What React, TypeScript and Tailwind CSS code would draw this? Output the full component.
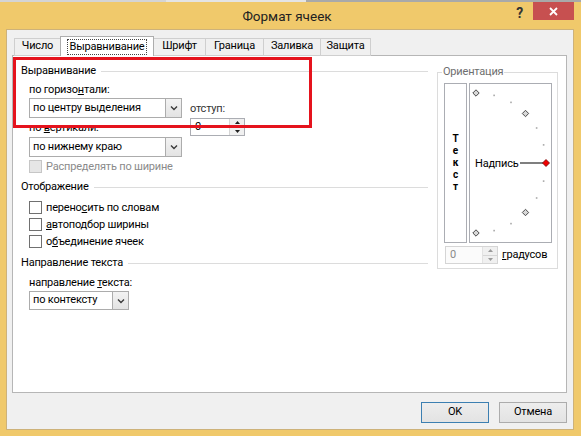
import { FC, ReactNode } from 'react';

// Win8-style "Формат ячеек" dialog, Alignment tab

const GroupHeader: FC<{ title: string; className?: string }> = ({ title, className = '' }) => (
  <div className={`flex h-4 items-center ${className}`}>
    <span className="whitespace-nowrap leading-4">{title}</span>
    <div className="ml-[5px] h-px flex-1 bg-[#DCDCDC]" />
  </div>
);

const Chevron: FC = () => (
  <svg width="8" height="6" viewBox="0 0 8 6">
    <path d="M1 1.5 L4 4.5 L7 1.5" fill="none" stroke="#3A3A3A" strokeWidth="1.4" />
  </svg>
);

const Select: FC<{ value: string; className?: string }> = ({ value, className = '' }) => (
  <div className={`flex border border-[#ACACAC] bg-white ${className}`}>
    <div className="flex flex-1 items-center whitespace-nowrap pl-[3px]">{value}</div>
    <div className="flex w-4 items-center justify-center border-l border-[#ACACAC] bg-gradient-to-b from-[#F3F3F3] to-[#E3E3E3]">
      <Chevron />
    </div>
  </div>
);

const Spinner: FC<{ disabled?: boolean; className?: string }> = ({ disabled = false, className = '' }) => {
  const arrow = disabled ? '#9A9A9A' : '#1E1E1E';
  return (
    <div
      className={`flex h-[18px] border ${
        disabled ? 'border-[#D5D5D5] bg-[#FBFBFB] text-[#8A8A8A]' : 'border-[#ABADB3] bg-white text-black'
      } ${className}`}
    >
      <div className="flex flex-1 items-center pl-[4px]">0</div>
      <div className={`flex w-[15px] flex-col border-l ${disabled ? 'border-[#E2E2E2]' : 'border-[#D6D6D6]'} bg-[#F0F0F0]`}>
        <div className="flex flex-1 items-center justify-center border-b border-[#D6D6D6]">
          <svg width="5" height="3" viewBox="0 0 5 3">
            <path d="M0 3 L2.5 0 L5 3 Z" fill={arrow} />
          </svg>
        </div>
        <div className="flex flex-1 items-center justify-center">
          <svg width="5" height="3" viewBox="0 0 5 3">
            <path d="M0 0 L2.5 3 L5 0 Z" fill={arrow} />
          </svg>
        </div>
      </div>
    </div>
  );
};

const Checkbox: FC<{ children: ReactNode; disabled?: boolean; className?: string }> = ({
  children,
  disabled = false,
  className = '',
}) => (
  <div className={`flex h-[17px] items-center ${className}`}>
    <div
      className={`h-[13px] w-[13px] shrink-0 border ${
        disabled ? 'border-[#C6C6C6] bg-[#E6E6E6]' : 'border-[#707070] bg-white'
      }`}
    />
    <span className={`ml-[4px] whitespace-nowrap leading-4 ${disabled ? 'text-[#8A8A8A]' : ''}`}>{children}</span>
  </div>
);

const tabs = [
  { label: 'Число', w: 'w-[47px]' },
  { label: 'Выравнивание', w: 'w-[94px]', active: true },
  { label: 'Шрифт', w: 'w-[53px]' },
  { label: 'Граница', w: 'w-[59px]' },
  { label: 'Заливка', w: 'w-[58px]' },
  { label: 'Защита', w: 'w-[51px]' },
];

// dial: centre (6,79), radius 70, inside the dial box
const cx = 6;
const cy = 79;
const r = 70;
const pt = (deg: number) => {
  const a = (deg * Math.PI) / 180;
  return { x: cx + r * Math.cos(a), y: cy - r * Math.sin(a) };
};
const diamond = (x: number, y: number, s = 3.2) =>
  `${x},${y - s} ${x + s},${y} ${x},${y + s} ${x - s},${y}`;

const Dial: FC = () => (
  <svg width="81" height="158" viewBox="0 0 81 158">
    {[75, 60, 30, 15, -15, -30, -60, -75].map((d) => {
      const p = pt(d);
      return <rect key={d} x={p.x - 0.8} y={p.y - 0.8} width="1.6" height="1.6" fill="#A8A8A8" />;
    })}
    {[90, 45, -45, -90].map((d) => {
      const p = pt(d);
      return (
        <polygon
          key={d}
          points={diamond(p.x, p.y)}
          fill="#D8D8D8"
          stroke="#4A4A4A"
          strokeWidth="1"
        />
      );
    })}
    <line x1="50" y1="79" x2="73" y2="79" stroke="#555" strokeWidth="1.5" />
    <polygon points={diamond(76, 79, 3.5)} fill="#F00000" stroke="#700000" strokeWidth="0.8" />
    <text x="5" y="83" fontSize="11" letterSpacing="-0.2" fill="#000" fontFamily="Roboto, sans-serif">
      Надпись
    </text>
  </svg>
);

const App: FC = () => {
  return (
    <div className="relative h-[436px] w-[581px] overflow-hidden bg-[#F0C96B] font-['Roboto',sans-serif] text-[11px] tracking-[-0.2px] text-black">
      {/* strip of the window behind */}
      <div className="flex h-[2px]">
        <div className="w-[166px] bg-[#D4D4D4]" />
        <div className="w-[140px] bg-[#E4E4E4]" />
        <div className="flex-1 bg-[#A9A9A9]" />
      </div>

      {/* title bar */}
      <div className="flex h-[27px]">
        <div className="flex-1" />
        <div className="flex items-center pt-[1px] text-[13.5px] tracking-normal text-[#222]">Формат ячеек</div>
        <div className="flex flex-1 items-start justify-end pr-[7px]">
          <span className="mr-[10px] mt-[1px] text-[14px] font-bold leading-5 text-[#333]">?</span>
          <div className="flex h-[18px] w-[41px] items-center justify-center bg-[#C75050]">
            <svg width="9" height="9" viewBox="0 0 9 9">
              <path d="M1 1 L8 8 M8 1 L1 8" stroke="#fff" strokeWidth="1.8" />
            </svg>
          </div>
        </div>
      </div>

      {/* client area */}
      <div className="ml-[6px] h-[401px] w-[568px] border border-[#CDB27A] bg-[#F0F0F0] pt-[6px]">
        {/* tabs */}
        <div className="relative z-10 -mb-px ml-[7px] flex h-5 items-end">
          {tabs.map((t, i) =>
            t.active ? (
              <div
                key={t.label}
                className={`${t.w} relative z-10 -ml-px flex h-5 items-start justify-center border border-b-0 border-[#ADADAD] bg-white pt-[2px]`}
              >
                <span className="border border-dotted border-[#444] px-[2px] pb-px leading-[13px]">{t.label}</span>
              </div>
            ) : (
              <div
                key={t.label}
                className={`${t.w} ${i > 0 ? '-ml-px' : ''} flex h-[18px] items-center justify-center border border-[#CFCFCF] bg-[#F0F0F0] pb-px`}
              >
                {t.label}
              </div>
            )
          )}
        </div>

        {/* tab panel */}
        <div className="ml-[5px] flex h-[338px] w-[555px] border border-[#B6B6B6] bg-white">
          {/* left column */}
          <div className="w-[415px] pl-[8px] pt-[7px]">
            <GroupHeader title="Выравнивание" />
            <div className="ml-[8px] mt-[3px] flex">
              <div className="w-[153px]">
                <div className="h-4 leading-4">
                  по горизо<u>н</u>тали:
                </div>
                <Select value="по центру выделения" className="h-5 w-[153px]" />
                <div className="mt-[2px] h-4 leading-4">
                  по <u>в</u>ертикали:
                </div>
                <Select value="по нижнему краю" className="mt-px h-5 w-[153px]" />
                <Checkbox disabled className="mt-px">
                  Распределять по ширине
                </Checkbox>
              </div>
              <div className="ml-[8px] pt-[19px]">
                <div className="h-4 leading-4 text-[#333]">отступ:</div>
                <Spinner className="mt-px w-[55px]" />
              </div>
            </div>

            <GroupHeader title="Отображение" className="mt-[4px]" />
            <div className="ml-[8px] mt-[4px]">
              <Checkbox>
                перено<u>с</u>ить по словам
              </Checkbox>
              <Checkbox>
                <u>а</u>втоподбор ширины
              </Checkbox>
              <Checkbox>
                о<u>б</u>ъединение ячеек
              </Checkbox>
            </div>

            <GroupHeader title="Направление текста" className="mt-[5px]" />
            <div className="ml-[8px] mt-[4px] h-4 leading-4">
              направление <u>т</u>екста:
            </div>
            <Select value="по контексту" className="ml-[8px] h-[19px] w-[100px]" />
          </div>

          {/* orientation */}
          <div className="relative ml-[9px] mt-[16px] h-[197px] w-[121px] border border-[#DCDCDC] pl-[6px] pt-[10px]">
            <span className="absolute -top-[9px] left-[4px] bg-white px-px leading-4 text-[#6E6E6E]">Ориентация</span>
            <div className="flex gap-[2px]">
              <div className="flex h-[160px] w-[23px] flex-col items-center justify-center border border-[#ABADB3] text-[10px] font-bold leading-[12px] tracking-normal">
                <span>Т</span>
                <span>е</span>
                <span>к</span>
                <span>с</span>
                <span>т</span>
              </div>
              <div className="h-[160px] w-[83px] border border-[#ABADB3]">
                <Dial />
              </div>
            </div>
            <div className="mt-[3px] flex items-center">
              <Spinner disabled className="ml-px w-[53px]" />
              <span className="ml-[4px] leading-4">
                <u>г</u>радусов
              </span>
            </div>
          </div>
        </div>

        {/* buttons */}
        <div className="mt-[9px] flex justify-end gap-[10px] pr-[6px]">
          <div className="flex h-[21px] w-[68px] items-center justify-center border border-[#3C7FB1] bg-gradient-to-b from-[#EDEDED] to-[#E3E3E3]">
            OK
          </div>
          <div className="flex h-[21px] w-[68px] items-center justify-center border border-[#ACACAC] bg-gradient-to-b from-[#EDEDED] to-[#E3E3E3]">
            Отмена
          </div>
        </div>
      </div>

      {/* red annotation frame */}
      <div className="pointer-events-none absolute left-[13px] top-[57px] h-[71px] w-[299px] border-[3px] border-[#E5131D]" />
    </div>
  );
};

export default App;
